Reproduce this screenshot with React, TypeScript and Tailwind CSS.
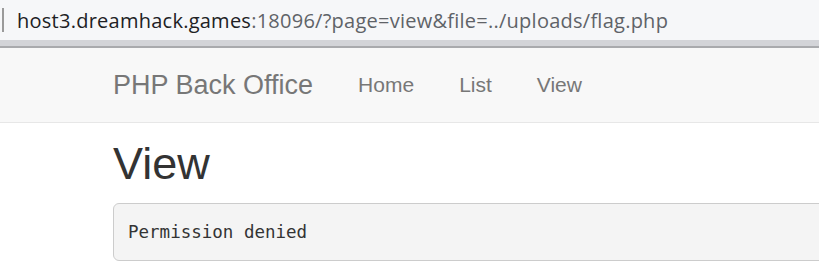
export default function App() {
  return (
    <div className="w-[819px] h-[268px] overflow-hidden bg-white font-['Liberation_Sans',Arial,sans-serif]">
      {/* address bar */}
      <div className="h-[40px] bg-[#f6f7f9] flex items-center">
        <div className="ml-[2px] w-[2px] h-[24px] bg-[#9a9a9a]" />
        <div className="ml-[13px] mt-[2px] font-['Open_Sans',sans-serif] text-[20px] leading-none whitespace-nowrap tracking-[0.25px]">
          <span className="text-[#202124]">host3.dreamhack.games</span>
          <span className="text-[#5f6368]">:18096/?page=view&amp;file=../uploads/flag.php</span>
        </div>
      </div>
      <div className="h-[6px] bg-[#d3d4d8]" />
      <div className="h-[2px] bg-[#a9aaad]" />

      {/* navbar */}
      <nav className="h-[75px] bg-[#f8f8f8] border-b border-[#e7e7e7] flex items-center pl-[113px]">
        <span className="text-[27px] text-[#777777] mr-[45px]">PHP Back Office</span>
        <ul className="flex gap-[45px] text-[21px] text-[#777777]">
          <li>Home</li>
          <li>List</li>
          <li>View</li>
        </ul>
      </nav>

      <main className="pl-[113px]">
        <h1 className="text-[45px] leading-none text-[#333333] mt-[18px] mb-[17px]">View</h1>
        <pre className="-mr-[20px] bg-[#f4f4f4] border border-[#cccccc] rounded-[6px] px-[14px] pt-[14px] pb-[14px] font-['DejaVu_Sans_Mono',monospace] text-[17.5px] leading-[28px] text-[#333333]">
          Permission denied
        </pre>
      </main>
    </div>
  )
}
